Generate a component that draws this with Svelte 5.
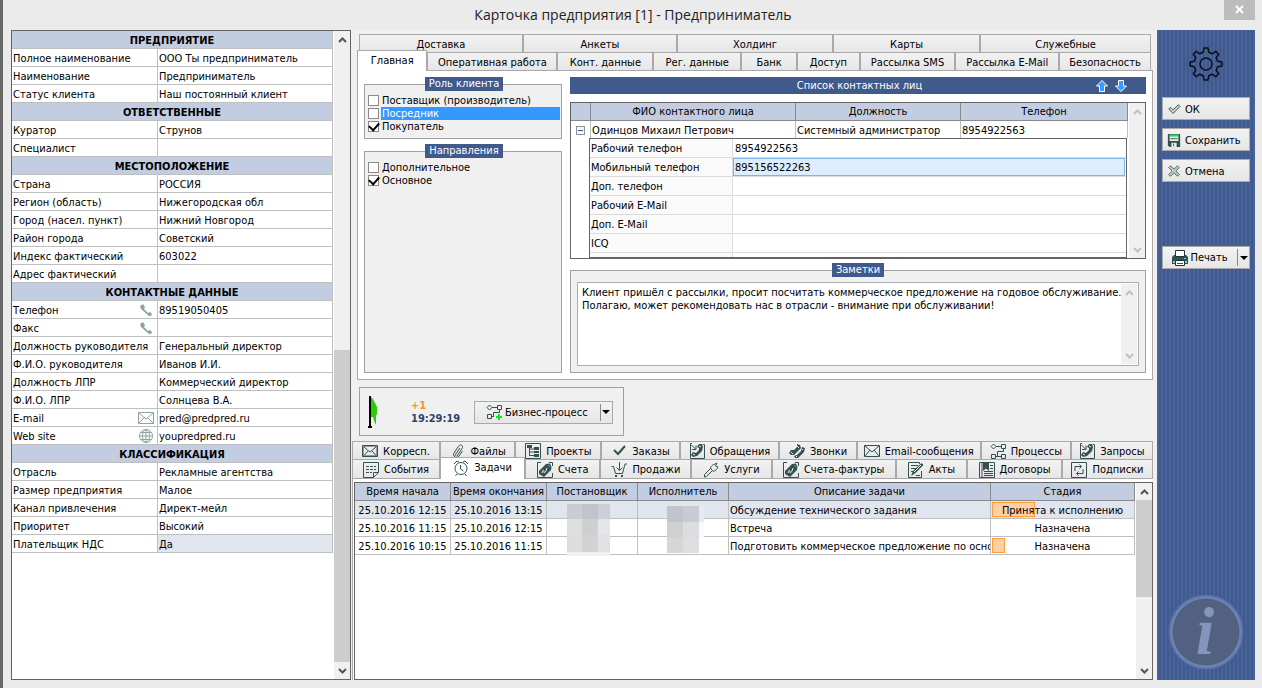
<script>
    const sections = [
        {
            title: "ПРЕДПРИЯТИЕ",
            rows: [
                { name: "Полное наименование", value: "ООО Ты предприниматель" },
                { name: "Наименование", value: "Предприниматель" },
                { name: "Статус клиента", value: "Наш постоянный клиент" },
            ],
        },
        {
            title: "ОТВЕТСТВЕННЫЕ",
            rows: [
                { name: "Куратор", value: "Струнов" },
                { name: "Специалист", value: "" },
            ],
        },
        {
            title: "МЕСТОПОЛОЖЕНИЕ",
            rows: [
                { name: "Страна", value: "РОССИЯ" },
                { name: "Регион (область)", value: "Нижегородская обл" },
                { name: "Город (насел. пункт)", value: "Нижний Новгород" },
                { name: "Район города", value: "Советский" },
                { name: "Индекс фактический", value: "603022" },
                { name: "Адрес фактический", value: "" },
            ],
        },
        {
            title: "КОНТАКТНЫЕ ДАННЫЕ",
            rows: [
                { name: "Телефон", value: "89519050405", icon: "handset" },
                { name: "Факс", value: "", icon: "handset" },
                { name: "Должность руководителя", value: "Генеральный директор" },
                { name: "Ф.И.О. руководителя", value: "Иванов И.И." },
                { name: "Должность ЛПР", value: "Коммерческий директор" },
                { name: "Ф.И.О. ЛПР", value: "Солнцева В.А." },
                { name: "E-mail", value: "pred@predpred.ru", icon: "envelope" },
                { name: "Web site", value: "youpredpred.ru", icon: "globe" },
            ],
        },
        {
            title: "КЛАССИФИКАЦИЯ",
            rows: [
                { name: "Отрасль", value: "Рекламные агентства" },
                { name: "Размер предприятия", value: "Малое" },
                { name: "Канал привлечения", value: "Директ-мейл" },
                { name: "Приоритет", value: "Высокий" },
                { name: "Плательщик НДС", value: "Да" },
            ],
        },
    ];

    // size is the tab's share of the row
    const cardTabsBack = [
        { name: "Доставка", size: 164 },
        { name: "Анкеты", size: 154 },
        { name: "Холдинг", size: 156 },
        { name: "Карты", size: 147 },
        { name: "Служебные", size: 171 },
    ];
    const cardTabsFront = [
        { name: "Главная", size: 70 },
        { name: "Оперативная работа", size: 131 },
        { name: "Конт. данные", size: 96 },
        { name: "Рег. данные", size: 88 },
        { name: "Банк", size: 55 },
        { name: "Доступ", size: 62 },
        { name: "Рассылка SMS", size: 96 },
        { name: "Рассылка E-Mail", size: 104 },
        { name: "Безопасность", size: 92 },
    ];
    const docTabsBack = [
        { name: "Корресп.", icon: "stamp", size: 88 },
        { name: "Файлы", icon: "clip", size: 75 },
        { name: "Проекты", icon: "tree", size: 86 },
        { name: "Заказы", icon: "check", size: 78 },
        { name: "Обращения", icon: "request", size: 100 },
        { name: "Звонки", icon: "calls", size: 77 },
        { name: "Email-сообщения", icon: "mail", size: 125 },
        { name: "Процессы", icon: "process", size: 90 },
        { name: "Запросы", icon: "request", size: 82 },
    ];
    const docTabsFront = [
        { name: "События", icon: "note", size: 88 },
        { name: "Задачи", icon: "alarm", size: 85 },
        { name: "Счета", icon: "bill", size: 75 },
        { name: "Продажи", icon: "cart", size: 91 },
        { name: "Услуги", icon: "wrench", size: 80 },
        { name: "Счета-фактуры", icon: "bill", size: 125 },
        { name: "Акты", icon: "act", size: 71 },
        { name: "Договоры", icon: "contract", size: 95 },
        { name: "Подписки", icon: "subscribe", size: 91 },
    ];

    let cardTab = $state("Главная");
    let docTab = $state("Задачи");

    let roles = $state([
        { name: "Поставщик (производитель)", checked: false },
        { name: "Посредник", checked: false },
        { name: "Покупатель", checked: true },
    ]);
    let selectedRole = "Посредник";
    let directions = $state([
        { name: "Дополнительное", checked: false },
        { name: "Основное", checked: true },
    ]);

    let expanded = $state(true);
    let details = $state([
        { name: "Рабочий телефон", value: "8954922563" },
        { name: "Мобильный телефон", value: "895156522263" },
        { name: "Доп. телефон", value: "" },
        { name: "Рабочий E-Mail", value: "" },
        { name: "Доп. E-Mail", value: "" },
        { name: "ICQ", value: "" },
        { name: "", value: "" },
    ]);
    let activeDetail = $state(1);

    let notes = $state(
        "Клиент пришёл с рассылки, просит посчитать коммерческое предложение на годовое обслуживание.\nПолагаю, может рекомендовать нас в отрасли - внимание при обслуживании!",
    );

    const tasks = [
        {
            start: "25.10.2016 12:15",
            end: "25.10.2016 13:15",
            text: "Обсуждение технического задания",
            stage: "Принята к исполнению",
            progress: 30,
            active: true,
        },
        {
            start: "25.10.2016 11:15",
            end: "25.10.2016 12:15",
            text: "Встреча",
            stage: "Назначена",
            progress: 0,
        },
        {
            start: "25.10.2016 10:15",
            end: "25.10.2016 11:15",
            text: "Подготовить коммерческое предложение по основ",
            stage: "Назначена",
            progress: 9,
        },
    ];

    function gearPath(teeth, outer, inner) {
        const step = (Math.PI * 2) / teeth;
        const offsets = [
            [-0.3, inner],
            [-0.17, outer],
            [0.17, outer],
            [0.3, inner],
        ];
        const points = [];
        for (let i = 0; i < teeth; i++) {
            for (const [shift, radius] of offsets) {
                const a = (i + shift) * step - Math.PI / 2;
                points.push(
                    `${(17 + radius * Math.cos(a)).toFixed(1)} ${(17 + radius * Math.sin(a)).toFixed(1)}`,
                );
            }
        }
        return `M${points.join("L")}Z`;
    }
</script>

{#snippet icon(name)}
    <svg class="icon" viewBox="0 0 16 16" aria-hidden="true">
        {#if name === "handset"}
            <path class="pale-fill" d="M2 4l3-2 2 3-1 2 4 4 2-1 2 2-1 2h-2L3 7z" />
        {:else if name === "envelope"}
            <path class="pale" d="M.5 2.500h15v11H.5zM1 3l7 6 7-6M1 13l5-5M15 13l-5-5" />
        {:else if name === "globe"}
            <circle class="pale" cx="8" cy="8" r="6.5" />
            <path class="pale" d="M1.5 8h13M8 1.5v13M2.5 4.5h11M2.5 11.5h11" />
            <ellipse class="pale" cx="8" cy="8" rx="3.5" ry="6.5" />
        {:else if name === "stamp"}
            <path d="M.5 2.500h15v11H.5z" />
            <path class="dotted" d="M1.500 3.500h13v9h-13z" />
            <path d="M2 4l6 5 6-5M2 12.500l4-4.500M14 12.500L10 8" />
        {:else if name === "clip"}
            <path d="M10 5l-4.500 6.500c-1 1.500.8 2.500 1.700 1.200L12 5.500c2-3-1.500-5-3.400-2.300L4 10c-2 3.500 2.500 6.500 4.800 3.200L12.500 8" />
        {:else if name === "tree"}
            <path d="M.5.5h15v15H.5z" />
            <path class="fill" d="M2 2h5v3H2zM9 4h5v3H9zM9 8h5v2H9zM9 11h5v3H9z" />
            <path d="M4.500 4v8.500H9M4.500 6H9M4.500 9H9" />
        {:else if name === "check"}
            <path class="thick" d="M3 7l4 4 7-8" />
        {:else if name === "request"}
            <path d="M1.500 7v8.500h14V1.500H14M1.500 13V.5H3" />
            <path class="fill" d="M10 1l3 0 1 3-1 4-5 5-4 1-2-2 2-3 3 1 3-3 0-2-2-1z" />
            <path d="M2.500 2l4 4M7 2.500V6.500H3" />
            <path class="white" d="M10 3l2 1M4 11l2 1" />
        {:else if name === "calls"}
            <path class="fill" d="M8 1l3 1 1 3-7 7-3 0-2-2 2-3 3 0 3-3z" />
            <path class="fill" d="M13 4l3 1-1 4-6 6-3 0-1-2 3-1 4-4z" />
            <path class="white" d="M8 3l2 2M2 9l2 2M7 13l1 1M13 6l1 1" />
        {:else if name === "mail"}
            <path d="M.5 2.500h15v11H.5zM1 3l7 6 7-6M1 13l5-6M15 13l-5-6" />
        {:else if name === "process"}
            <path d="M3.500 1L6 3.500 3.500 6 1 3.500zM6 3.500h5M11.500 1.500h4v4h-4zM13.500 5.500V8.500H7.500v5M1.500 11.500h4v4h-4zM5.500 13.500h6M11.500 11.500h4v4h-4z" />
        {:else if name === "process-add"}
            <path d="M3.500 1L6 3.500 3.500 6 1 3.500zM6 3.500h5M11.500 1.500h4v4h-4zM13.500 5.500V8.500H7.500v4M1.500 10.500h4v4h-4zM5.500 12.500H8" />
            <path class="plus" d="M13 10v6M10 13h6" />
        {:else if name === "note"}
            <path d="M.5.5h15v10l-5 5H.5zM10.500 15v-4.500H15" />
            <path class="dash" d="M3 4.500h10M3 7.500h10M3 10.500h6" />
        {:else if name === "alarm"}
            <circle cx="8" cy="8.500" r="6" />
            <path d="M7.500 5v4l3 2M1 4l3-3 2 1M15 4l-3-3-2 1M4 14l-1.500 2M12 14l1.500 2" />
        {:else if name === "bill"}
            <path d="M4 .5H.5v15h15V11M15.500 4V.5H12" />
            <path class="fill" d="M2 9l7-7 4-.5L14.500 5 14 8l-7 7-5-3z" />
            <path class="white" d="M5 11c1-4 2-3 2-1s2 0 3-4M11.500 3.500l1 1" />
        {:else if name === "cart"}
            <path d="M.5 4.500h2l2 7h7L14 2h2M8.500 0v8M5.500 5.500L8.500 8.500 11.500 5.500" />
            <path class="fill" d="M4 13h2v2H4zM10 13h2v2h-2z" />
        {:else if name === "wrench"}
            <path d="M1.500 12.500l6-6 2 2-6 6-2 .5zM8 7c-1-2 1-4 3-4.500l3-1.500-1.500 3L15 5c-1 2-3 5-5.500 4" />
        {:else if name === "act"}
            <path d="M11.500 2V.5H.5v15h13V9M3 3.500h7M3 6.500h5M3 9.500h3M8 13.500h4" />
            <path class="fill" d="M13.500 1l2 2-8 8-4.500 3 2-5z" />
            <path class="white" d="M6 10l7-7" />
        {:else if name === "contract"}
            <path d="M.5 .5h15v15H.5zM3 .5v15M11 3.500h3M11 6.500h3M5 9.500h9M5 11.500h9M5 13.500h9" />
            <path class="fill" d="M4 1h6v8L7 6.500 4 9z" />
        {:else if name === "subscribe"}
            <path d="M.5.5h15v15H.5zM4 9V4.500h6M8.500 2.500l2 2-2 2M12 7v4.500H6M7.500 9.500l-2 2 2 2" />
        {:else if name === "ok"}
            <path class="outline" d="M2 8l2-2 3 3 6-6 2 2-8 8z" />
        {:else if name === "save"}
            <path class="fill" d="M1 1h14v15H3l-2-2z" />
            <path class="paper" d="M3 2h10v7H3zM5 11h6v5H5z" />
            <path class="green" d="M3 2h10v2H3z" />
            <path d="M4 6.500h8M7.500 12v3" />
        {:else if name === "cancel"}
            <path class="outline" d="M2 4l2-2 4 4 4-4 2 2-4 4 4 4-2 2-4-4-4 4-2-2 4-4z" />
        {:else if name === "print"}
            <path class="fill" d="M2 5h12l2 2v7H0V7z" />
            <path class="sheet" d="M3.500.5h9v6h-9zM3.500 10.500h9v5h-9z" />
            <path d="M5 13.500h6" />
            <path class="lamp" d="M12 8h2v1h-2zM1 11h2v2H1zM13 11h2v2h-2z" />
        {/if}
    </svg>
{/snippet}

{#snippet scrollbar(before, thumb, after, muted)}
    <div class="scrollbar" class:muted>
        <button class="scroll-btn" aria-label="Вверх">
            <svg viewBox="0 0 9 6"><path d="M1 5l3.500-3.500L8 5" /></svg>
        </button>
        <div style:flex-grow={before}></div>
        <div class="thumb" style:flex-grow={thumb}></div>
        <div style:flex-grow={after}></div>
        <button class="scroll-btn" aria-label="Вниз">
            <svg viewBox="0 0 9 6"><path d="M1 1l3.500 3.500L8 1" /></svg>
        </button>
    </div>
{/snippet}

<div class="window">
    <header class="title-bar">
        <h1>Карточка предприятия [1] - Предприниматель</h1>
        <button class="close" aria-label="Закрыть">
            <svg viewBox="0 0 9 9"><path d="M1 1l7 7M8 1L1 8" /></svg>
        </button>
    </header>

    <div class="body">
        <aside class="props">
            <div class="props-list">
                <table>
                    <colgroup>
                        <col class="prop-name" />
                        <col />
                    </colgroup>
                    {#each sections as section}
                        <tbody>
                            <tr><th colspan="2">{section.title}</th></tr>
                            {#each section.rows as row}
                                <tr>
                                    <td>
                                        <div class="prop">
                                            {row.name}
                                            {#if row.icon}{@render icon(row.icon)}{/if}
                                        </div>
                                    </td>
                                    <td class:current={row.name === "Плательщик НДС"}>{row.value}</td>
                                </tr>
                            {/each}
                        </tbody>
                    {/each}
                </table>
            </div>
            {@render scrollbar(302, 312, 0, false)}
        </aside>

        <main>
            <section class="card">
                <div class="tabs back" role="tablist">
                    {#each cardTabsBack as tab}
                        <button
                            class="tab"
                            role="tab"
                            aria-selected={cardTab === tab.name}
                            style:flex-grow={tab.size}
                            onclick={() => (cardTab = tab.name)}>{tab.name}</button
                        >
                    {/each}
                </div>
                <div class="tabs front" role="tablist">
                    {#each cardTabsFront as tab}
                        <button
                            class="tab"
                            class:active={cardTab === tab.name}
                            role="tab"
                            aria-selected={cardTab === tab.name}
                            style:flex-grow={tab.size}
                            onclick={() => (cardTab = tab.name)}>{tab.name}</button
                        >
                    {/each}
                </div>

                <div class="card-page">
                    <div class="groups">
                        <fieldset>
                            <legend>Роль клиента</legend>
                            {#each roles as role}
                                <label class="option">
                                    <input type="checkbox" bind:checked={role.checked} />
                                    <span class:selected={role.name === selectedRole}>{role.name}</span>
                                </label>
                            {/each}
                        </fieldset>
                        <fieldset class="grow">
                            <legend>Направления</legend>
                            {#each directions as direction}
                                <label class="option">
                                    <input type="checkbox" bind:checked={direction.checked} />
                                    <span>{direction.name}</span>
                                </label>
                            {/each}
                        </fieldset>
                    </div>

                    <div class="contacts">
                        <div class="contacts-title">
                            <h2>Список контактных лиц</h2>
                            <button class="move" aria-label="Выше">
                                <svg viewBox="0 0 12 12"><path d="M6 .5L11.500 6H8.500v5.500h-5V6H.5z" /></svg>
                            </button>
                            <button class="move" aria-label="Ниже">
                                <svg viewBox="0 0 12 12"><path d="M6 11.500L11.500 6H8.500V.5h-5V6H.5z" /></svg>
                            </button>
                        </div>

                        <div class="contact-grid">
                            <div class="contact-scroll">
                                <table class="people">
                                    <colgroup>
                                        <col class="mark" />
                                        <col class="who" />
                                        <col class="post" />
                                        <col />
                                    </colgroup>
                                    <thead>
                                        <tr>
                                            <th></th>
                                            <th>ФИО контактного лица</th>
                                            <th>Должность</th>
                                            <th>Телефон</th>
                                        </tr>
                                    </thead>
                                    <tbody>
                                        <tr>
                                            <td>
                                                <button
                                                    class="expander"
                                                    aria-label="Свернуть"
                                                    aria-expanded={expanded}
                                                    onclick={() => (expanded = !expanded)}
                                                ></button>
                                            </td>
                                            <td>Одинцов Михаил Петрович</td>
                                            <td>Системный администратор</td>
                                            <td>8954922563</td>
                                        </tr>
                                    </tbody>
                                </table>
                                {#if expanded}
                                    <div class="details">
                                        <table>
                                            <tbody>
                                                {#each details as detail, i}
                                                    <tr>
                                                        <th scope="row">{detail.name}</th>
                                                        <td>
                                                            <input
                                                                class:active={i === activeDetail}
                                                                aria-label={detail.name}
                                                                bind:value={detail.value}
                                                                onfocus={() => (activeDetail = i)}
                                                            />
                                                        </td>
                                                    </tr>
                                                {/each}
                                            </tbody>
                                        </table>
                                    </div>
                                {/if}
                            </div>
                            {@render scrollbar(1, 0, 0, true)}
                        </div>

                        <fieldset class="notes">
                            <legend>Заметки</legend>
                            <div class="notes-box">
                                <textarea rows="6" aria-label="Заметки" bind:value={notes}></textarea>
                                {@render scrollbar(1, 0, 0, true)}
                            </div>
                        </fieldset>
                    </div>
                </div>
            </section>

            <section class="process">
                <svg class="flag" viewBox="0 0 12 32">
                    <path class="cloth" d="M3 1l2 2 2 4 2 4v7l-1 2v9l-2-4-1-4H3z" />
                    <path d="M1 0h2v30h1v2H0v-2h1z" />
                </svg>
                <div class="timer">
                    <span class="plus-one">+1</span>
                    <span class="clock">19:29:19</span>
                </div>
                <div class="split">
                    <button class="split-main">{@render icon("process-add")}Бизнес-процесс</button>
                    <button class="split-more" aria-label="Ещё"><i class="arrow"></i></button>
                </div>
            </section>

            <section class="docs">
                <div class="tabs" role="tablist">
                    {#each docTabsBack as tab}
                        <button
                            class="tab"
                            role="tab"
                            aria-selected={docTab === tab.name}
                            style:flex-grow={tab.size}
                            onclick={() => (docTab = tab.name)}
                            >{@render icon(tab.icon)}{tab.name}</button
                        >
                    {/each}
                </div>
                <div class="tabs lower" role="tablist">
                    {#each docTabsFront as tab}
                        <button
                            class="tab"
                            class:active={docTab === tab.name}
                            role="tab"
                            aria-selected={docTab === tab.name}
                            style:flex-grow={tab.size}
                            onclick={() => (docTab = tab.name)}
                            >{@render icon(tab.icon)}{tab.name}</button
                        >
                    {/each}
                </div>
                <div class="docs-page">
                    <div class="task-grid">
                        <div class="task-list">
                            <table>
                                <colgroup>
                                    <col class="time" />
                                    <col class="time" />
                                    <col class="person" />
                                    <col class="person" />
                                    <col />
                                    <col class="stage-col" />
                                </colgroup>
                                <thead>
                                    <tr>
                                        <th>Время начала</th>
                                        <th>Время окончания</th>
                                        <th>Постановщик</th>
                                        <th>Исполнитель</th>
                                        <th>Описание задачи</th>
                                        <th>Стадия</th>
                                    </tr>
                                </thead>
                                <tbody>
                                    {#each tasks as task, i}
                                        <tr class:current={task.active}>
                                            <td class="date">{task.start}</td>
                                            <td class="date">{task.end}</td>
                                            <td class="hidden-name">
                                                {#if i === 0}
                                                    <svg class="mosaic" viewBox="0 0 46 54">
                                                        <path fill="#c9ccd5" d="M0 0h15v15H0z" />
                                                        <path fill="#c2c4cb" d="M15 0h16v15H15z" />
                                                        <path fill="#cbcfd9" d="M31 0h12v15H31z" />
                                                        <path fill="#dedfe1" d="M0 15h15v16H0z" />
                                                        <path fill="#cfcfd0" d="M15 15h16v16H15z" />
                                                        <path fill="#e5e6e8" d="M31 15h12v16H31z" />
                                                        <path fill="#dcdddf" d="M0 31h15v17H0z" />
                                                        <path fill="#d3d3d5" d="M15 31h16v17H15z" />
                                                        <path fill="#e0e1e4" d="M31 31h12v17H31z" />
                                                        <path fill="#f1f1f1" d="M0 48h43v4H0z" />
                                                    </svg>
                                                {/if}
                                            </td>
                                            <td class="hidden-name">
                                                {#if i === 0}
                                                    <svg class="mosaic" viewBox="0 0 46 54">
                                                        <path fill="#c2c4cb" d="M9 2h16v16H9z" />
                                                        <path fill="#c8cbd4" d="M25 2h16v16H25z" />
                                                        <path fill="#e7e9f1" d="M41 2h5v16h-5z" />
                                                        <path fill="#d0d0d0" d="M9 18h16v16H9z" />
                                                        <path fill="#dcdde0" d="M25 18h16v16H25z" />
                                                        <path fill="#fafafb" d="M41 18h5v16h-5z" />
                                                        <path fill="#d7d6d4" d="M9 34h16v15H9z" />
                                                        <path fill="#dedee1" d="M25 34h16v15H25z" />
                                                    </svg>
                                                {/if}
                                            </td>
                                            <td>{task.text}</td>
                                            <td class="stage">
                                                {#if task.progress}
                                                    <div class="bar" style:width="{task.progress}%"></div>
                                                {/if}
                                                <span>{task.stage}</span>
                                            </td>
                                        </tr>
                                    {/each}
                                </tbody>
                            </table>
                        </div>
                        {@render scrollbar(0, 95, 64, false)}
                    </div>
                </div>
            </section>
        </main>

        <aside class="actions">
            <svg class="gear" viewBox="0 0 34 34">
                <path d={gearPath(8, 16, 12)} />
                <circle cx="17" cy="17" r="6" />
            </svg>
            <button class="action">{@render icon("ok")}ОК</button>
            <button class="action">{@render icon("save")}Сохранить</button>
            <button class="action">{@render icon("cancel")}Отмена</button>
            <div class="split print">
                <button class="split-main">{@render icon("print")}Печать</button>
                <button class="split-more" aria-label="Ещё"><i class="arrow"></i></button>
            </div>
            <svg class="info" viewBox="0 0 76 76">
                <circle class="halo wide" cx="38" cy="38" r="35" />
                <circle class="halo" cx="38" cy="38" r="35" />
                <circle class="disc" cx="38" cy="38" r="34" />
                <text x="37" y="60" text-anchor="middle">i</text>
            </svg>
        </aside>
    </div>
</div>

<style>
    :global(body) {
        background: #ebebeb;
    }

    .window,
    .window * {
        box-sizing: border-box;
    }
    .window {
        display: flex;
        flex-direction: column;
        min-height: 100vh;
        padding: 0 7px 8px 8px;
        border-left: 3px solid #696969;
        background: #ebebeb;
        color: #000;
        font: 11px/13px "DejaVu Sans Condensed", "DejaVu Sans", sans-serif;
    }
    button,
    input,
    textarea {
        margin: 0;
        font: inherit;
        color: inherit;
    }
    table {
        width: 100%;
        border-collapse: separate;
        border-spacing: 0;
        table-layout: fixed;
    }
    th,
    td {
        padding: 0 1px;
        height: 18px;
        border-right: 1px solid #bfbfbf;
        border-bottom: 1px solid #bfbfbf;
        text-align: left;
        white-space: nowrap;
        overflow: hidden;
    }
    th {
        background: #c3cde1;
        text-align: center;
        font-weight: normal;
    }
    .icon {
        width: 16px;
        height: 16px;
        flex: none;
        fill: none;
        stroke: #345050;
    }
    .icon .fill {
        fill: #345050;
        stroke: none;
    }
    .icon .pale {
        stroke: #8ea3a3;
    }
    .icon .pale-fill {
        fill: #8ea3a3;
        stroke: none;
    }
    .icon .dotted {
        stroke-dasharray: 1 1;
    }
    .icon .dash {
        stroke-dasharray: 3 1;
    }
    .icon .thick {
        stroke-width: 2;
    }
    .icon .white {
        stroke: #f0f0f0;
    }
    .icon .plus {
        stroke: #00f020;
        stroke-width: 2;
    }
    .icon .outline {
        fill: #c5d2cc;
    }
    .icon .paper {
        fill: #e6ecec;
        stroke: none;
    }
    .icon .green {
        fill: #00e832;
        stroke: none;
    }
    .icon .sheet {
        fill: #fff;
        stroke: #1f3434;
    }
    .icon .lamp {
        fill: #6fd0d0;
        stroke: none;
    }

    .title-bar {
        display: flex;
        height: 30px;
        align-items: flex-start;
    }
    .title-bar h1 {
        flex: 1;
        margin: 0;
        padding-left: 31px;
        text-align: center;
        font: 14px/30px "Open Sans", "Noto Sans", sans-serif;
        color: #222;
    }
    .close {
        width: 31px;
        height: 20px;
        padding: 0;
        border: 0;
        background: #bcbcbc;
    }
    .close svg {
        width: 9px;
        height: 9px;
        stroke: #fff;
        stroke-width: 2;
    }

    .body {
        flex: 1;
        display: flex;
        background: #f0f0f0;
    }
    .props {
        display: flex;
        width: 340px;
        flex: none;
        border: 1px solid #646464;
        background: #fff;
    }
    .props-list {
        flex: 1;
        padding-right: 1px;
    }
    .props th,
    .props td {
        padding-top: 1px;
    }
    .props th {
        font-weight: bold;
    }
    .prop-name {
        width: 146px;
    }
    .prop {
        display: flex;
        justify-content: space-between;
        align-items: center;
        height: 16px;
        padding-right: 2px;
    }
    td.current,
    tr.current td {
        background: #e1e5f0;
    }

    .scrollbar {
        display: flex;
        flex-direction: column;
        width: 16px;
        flex: none;
        background: #f0f0f0;
    }
    .thumb {
        background: #cdcdcd;
    }
    .scroll-btn {
        display: flex;
        align-items: center;
        justify-content: center;
        height: 17px;
        padding: 0;
        border: 0;
        background: none;
    }
    .scroll-btn svg {
        width: 9px;
        height: 6px;
        fill: none;
        stroke: #555;
        stroke-width: 2;
    }
    .muted .scroll-btn svg {
        stroke: #bfbfbf;
    }

    main {
        flex: 1;
        min-width: 0;
        display: flex;
        flex-direction: column;
        padding: 4px 4px 0 1px;
    }
    .card {
        padding-left: 5px;
    }
    .tabs {
        display: flex;
    }
    .tabs.back {
        padding: 0 2px;
    }
    .tabs.front {
        padding-right: 2px;
    }
    .tab {
        display: flex;
        align-items: center;
        justify-content: center;
        gap: 5px;
        flex: 1 1 0;
        min-width: 0;
        height: 18px;
        padding: 1px 0 0;
        border: 1px solid #a9a9a9;
        border-bottom: 0;
        background: linear-gradient(#f2f2f2, #e6e6e6);
        white-space: nowrap;
    }
    .tab.active {
        height: 21px;
        margin: -2px 0 -1px;
        padding-bottom: 3px;
        background: #fff;
        z-index: 1;
    }
    .tabs.lower .tab {
        height: 19px;
    }
    .tabs.lower .active {
        height: 22px;
    }
    .card-page {
        display: flex;
        gap: 8px;
        padding: 6px;
        border: 1px solid #a9a9a9;
        background: #fff;
    }
    .groups {
        display: flex;
        flex-direction: column;
        gap: 5px;
        width: 198px;
    }
    fieldset {
        min-width: 0;
        margin: 0;
        padding: 3px 1px 5px 3px;
        border: 1px solid #a0a0a0;
        background: #f0f0f0;
    }
    fieldset.grow {
        flex: 1;
    }
    legend {
        margin: 0 auto;
        padding: 0 4px;
        height: 14px;
        background: #405a8c;
        color: #fff;
    }
    .option {
        display: flex;
        align-items: center;
        gap: 2px;
        height: 13px;
    }
    .option input {
        display: grid;
        justify-items: center;
        align-items: start;
        width: 11px;
        height: 11px;
        margin: 0;
        appearance: none;
        border: 1px solid #8a8a8a;
        background: #fff;
    }
    .option input:checked::before {
        content: "";
        width: 8px;
        height: 5px;
        border: solid #000;
        border-width: 0 0 2px 2px;
        transform: rotate(-48deg);
    }
    .option span {
        flex: 1;
        padding-left: 1px;
    }
    .option .selected {
        background: #3399ff;
        color: #fff;
    }

    .contacts {
        flex: 1;
        min-width: 0;
    }
    .contacts-title {
        display: flex;
        align-items: center;
        gap: 7px;
        height: 17px;
        padding: 0 19px 0 60px;
        background: #405a8c;
        color: #fff;
    }
    .contacts-title h2 {
        flex: 1;
        margin: 0;
        font-size: 11px;
        font-weight: normal;
        text-align: center;
    }
    .move {
        display: flex;
        padding: 0;
        border: 0;
        background: none;
    }
    .move svg {
        width: 12px;
        height: 12px;
        fill: #3b9bff;
        stroke: #fff;
    }
    .contact-grid {
        display: flex;
        height: 157px;
        margin: 8px 0 4px;
        border: 1px solid #646464;
        background: #fff;
    }
    .contact-scroll {
        display: flex;
        flex-direction: column;
        flex: 1;
        min-width: 0;
        padding-right: 1px;
        overflow: hidden;
    }
    .mark {
        width: 20px;
    }
    .who {
        width: 205px;
    }
    .post {
        width: 165px;
    }
    .people th,
    .task-list th {
        border-color: #8a8a8a;
    }
    .people td {
        height: 17px;
        padding-top: 1px;
        border-bottom: 0;
    }
    .people td:first-child {
        padding-top: 0;
        text-align: center;
    }
    .expander {
        display: inline-grid;
        place-items: center;
        width: 9px;
        height: 9px;
        padding: 0;
        border: 1px solid #919191;
        background: #f4f4f4;
        vertical-align: middle;
    }
    .expander::before {
        content: "";
        width: 5px;
        height: 1px;
        background: #3a5aa5;
    }
    .details {
        flex: 1;
        min-height: 0;
        margin: 0 1px 0 18px;
        border: 1px solid #646464;
        overflow: hidden;
    }
    .details th,
    .details td {
        height: 19px;
        border-color: #dcdcdc;
    }
    .details th {
        width: 143px;
        background: #fafafa;
        text-align: left;
    }
    .details td {
        padding: 0 1px 0 0;
        border-right: 0;
    }
    .details input {
        display: block;
        width: 100%;
        height: 18px;
        padding: 0 1px;
        border: 1px solid transparent;
        background: #fff;
        outline: none;
    }
    .details input.active {
        border-color: #7eb4ea;
        background: #dcedfe;
    }

    .notes {
        padding: 5px 6px 6px;
    }
    .notes-box {
        display: flex;
        padding: 1px;
        border: 1px solid #a9acb5;
        background: #fff;
    }
    .notes textarea {
        flex: 1;
        min-width: 0;
        height: 80px;
        padding: 2px 0 0 3px;
        border: 0;
        background: none;
        resize: none;
        outline: none;
        overflow: hidden;
        white-space: pre;
    }

    .process {
        display: flex;
        align-items: center;
        align-self: flex-start;
        height: 49px;
        margin: 7px 0 5px 7px;
        padding: 1px 10px 0 8px;
        border: 1px solid #a0a0a0;
    }
    .flag {
        width: 12px;
        height: 32px;
        margin-right: 31px;
    }
    .cloth {
        fill: #2fc90b;
    }
    .timer {
        display: flex;
        flex-direction: column;
        width: 63px;
        font-weight: bold;
    }
    .plus-one {
        color: #ff9226;
    }
    .clock {
        color: #2f4470;
    }
    .split {
        display: flex;
        height: 23px;
        border: 1px solid #a9a9a9;
        background: linear-gradient(#f2f2f2, #e6e6e6);
    }
    .split button {
        display: flex;
        align-items: center;
        justify-content: center;
        border: 0;
        background: none;
        white-space: nowrap;
    }
    .split-main {
        flex: 1;
        gap: 3px;
        padding: 0 12px 0 11px;
    }
    .split .split-more {
        width: 12px;
        margin: 2px 0;
        padding: 0;
        border-left: 1px solid #8a8a8a;
    }
    .arrow {
        border: 4px solid transparent;
        border-top-color: #000;
        border-bottom: 0;
    }

    .docs {
        flex: 1;
        display: flex;
        flex-direction: column;
    }
    .docs-page {
        flex: 1;
        display: flex;
        padding: 3px 0 0 1px;
        border: 1px solid #a9a9a9;
        border-width: 1px 0 0 1px;
        background: #fff;
    }
    .task-grid {
        flex: 1;
        display: flex;
        min-width: 0;
        border: 1px solid #646464;
    }
    .task-list {
        flex: 1;
        min-width: 0;
        padding-right: 1px;
    }
    .task-list th {
        padding-bottom: 1px;
    }
    .task-list td {
        padding-top: 1px;
    }
    .time {
        width: 96px;
    }
    .person {
        width: 91px;
    }
    .stage-col {
        width: 144px;
    }
    .date {
        text-align: center;
    }
    td.hidden-name {
        position: relative;
        overflow: visible;
    }
    .mosaic {
        position: absolute;
        top: 3px;
        left: 20px;
        width: 46px;
        height: 54px;
        z-index: 1;
    }
    td.stage {
        position: relative;
        text-align: center;
    }
    .bar {
        position: absolute;
        top: 1px;
        left: 1px;
        height: 15px;
        border: 1px solid #ff9c3c;
        background: #ffd0a4;
    }
    .stage span {
        position: relative;
    }

    .actions {
        display: flex;
        flex-direction: column;
        gap: 8px;
        width: 98px;
        flex: none;
        padding: 17px 5px 10px;
        background: repeating-linear-gradient(90deg, #48639a 0 2px, #415a8d 2px 4px);
    }
    .gear {
        align-self: center;
        width: 34px;
        height: 34px;
        margin-bottom: 8px;
        fill: none;
        stroke: #0a0f18;
        stroke-width: 1.5;
        stroke-linejoin: round;
    }
    .action {
        display: flex;
        align-items: center;
        gap: 4px;
        height: 23px;
        padding: 1px 4px 0;
        border: 1px solid #a9a9a9;
        background: linear-gradient(#f2f2f2, #e6e6e6);
        white-space: nowrap;
    }
    .action .icon {
        width: 14px;
        height: 14px;
    }
    .print {
        margin-top: 56px;
    }
    .print .split-main {
        gap: 2px;
        padding: 0 4px;
    }
    .info {
        align-self: center;
        width: 76px;
        height: 76px;
        margin-top: auto;
    }
    .halo {
        fill: none;
        stroke: #6a81b3;
        stroke-width: 2;
    }
    .halo.wide {
        stroke: #5670a6;
        stroke-width: 5;
    }
    .disc {
        fill: #52617f;
        stroke: #7486b0;
    }
    .info text {
        fill: #8494ba;
        font: italic bold 67px "Liberation Serif", serif;
    }
</style>
